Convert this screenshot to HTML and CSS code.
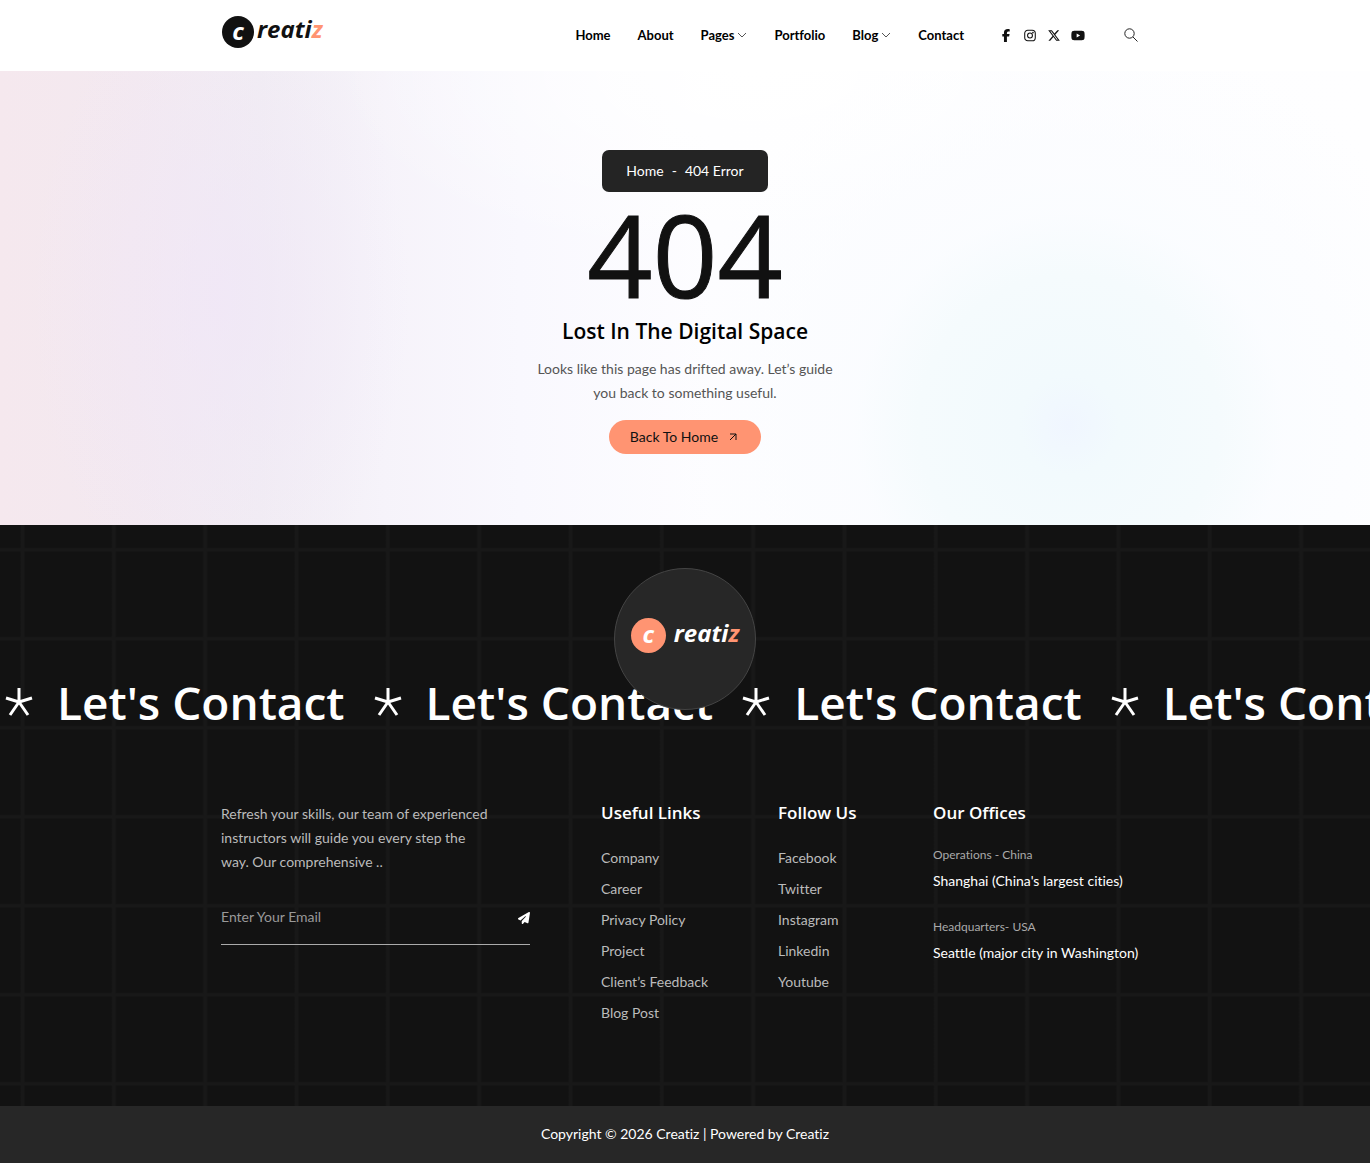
FILE: index.html
```html
<!DOCTYPE html>
<html lang="en">
<head>
    <meta charset="UTF-8">
    <meta name="viewport" content="width=device-width, initial-scale=1.0">
    <title>404 Error - Creatiz</title>
    <link rel="stylesheet" href="styles.css">
</head>
<body>
    <header class="header">
        <div class="container header-inner">
            <a class="logo" href="#"><span class="logo-mark">c</span><span class="logo-text">reati<span class="logo-z">z</span></span></a>

            <nav class="nav">
                <a href="#">Home</a>
                <a href="#">About</a>
                <a href="#">Pages
                    <svg class="caret" viewBox="0 0 10 6"><path d="M1 1l4 4 4-4"/></svg>
                </a>
                <a href="#">Portfolio</a>
                <a href="#">Blog
                    <svg class="caret" viewBox="0 0 10 6"><path d="M1 1l4 4 4-4"/></svg>
                </a>
                <a href="#">Contact</a>
            </nav>

            <div class="social">
                <a href="#" aria-label="Facebook">
                    <svg viewBox="0 0 320 512"><path d="M80 299.3V512H196V299.3h86.5l18-97.8H196V166.9c0-51.7 20.3-71.5 72.7-71.5c16.3 0 29.4 .4 37 1.2V7.9C291.4 4 256.4 0 236.2 0C129.3 0 80 50.5 80 141.4v60.1H14v97.8H80z"/></svg>
                </a>
                <a href="#" aria-label="Instagram">
                    <svg class="line" viewBox="0 0 16 16"><rect x="1.5" y="1.5" width="13" height="13" rx="3.8"/><circle cx="8" cy="8" r="3"/><circle class="dot" cx="11.6" cy="4.4" r="0.4"/></svg>
                </a>
                <a href="#" aria-label="X">
                    <svg viewBox="0 0 512 512"><path d="M389.2 48h70.6L305.6 224.2 487 464H345L233.7 318.6 106.5 464H35.8L200.7 275.5 26.8 48H172.4L272.9 180.9 389.2 48zM364.4 421.8h39.1L151.1 88h-42L364.4 421.8z"/></svg>
                </a>
                <a href="#" aria-label="Youtube">
                    <svg viewBox="0 0 576 512"><path d="M549.7 124.1c-6.3-23.7-24.8-42.3-48.3-48.6C458.8 64 288 64 288 64S117.2 64 74.6 75.5c-23.5 6.3-42 24.9-48.3 48.6-11.4 42.9-11.4 132.3-11.4 132.3s0 89.4 11.4 132.3c6.3 23.7 24.8 41.5 48.3 47.8C117.2 448 288 448 288 448s170.8 0 213.4-11.5c23.5-6.3 42-24.2 48.3-47.8 11.4-42.9 11.4-132.3 11.4-132.3s0-89.4-11.4-132.3zm-317.5 213.5V175.2l142.7 81.2-142.7 81.2z"/></svg>
                </a>
            </div>

            <button class="search-btn" type="button" aria-label="Search">
                <svg viewBox="0 0 14 14"><circle cx="5.5" cy="5.5" r="4.7"/><path d="M9 9l4.5 4.5"/></svg>
            </button>
        </div>
    </header>

    <main class="hero">
        <div class="breadcrumb"><a href="#">Home</a><span>-</span><span>404 Error</span></div>
        <h1>404</h1>
        <h2>Lost In The Digital Space</h2>
        <p>Looks like this page has drifted away. Let’s guide<br>you back to something useful.</p>
        <a class="home-btn" href="#">Back To Home
            <svg viewBox="0 0 8 8"><path d="M1 7l6-6M1 1h6v6"/></svg>
        </a>
    </main>

    <footer class="footer">
        <div class="footer-badge">
            <a class="logo logo-light" href="#"><span class="logo-mark">c</span><span class="logo-text">reati<span class="logo-z">z</span></span></a>
        </div>

        <div class="marquee">
            <div class="marquee-item"><svg viewBox="0 0 28 28"><path d="M14 14V0M14 14L1 10M14 14l13-4M14 14L5 27M14 14l9 13"/></svg><span>Let's Contact</span></div>
            <div class="marquee-item"><svg viewBox="0 0 28 28"><path d="M14 14V0M14 14L1 10M14 14l13-4M14 14L5 27M14 14l9 13"/></svg><span>Let's Contact</span></div>
            <div class="marquee-item"><svg viewBox="0 0 28 28"><path d="M14 14V0M14 14L1 10M14 14l13-4M14 14L5 27M14 14l9 13"/></svg><span>Let's Contact</span></div>
            <div class="marquee-item"><svg viewBox="0 0 28 28"><path d="M14 14V0M14 14L1 10M14 14l13-4M14 14L5 27M14 14l9 13"/></svg><span>Let's Contact</span></div>
        </div>

        <div class="container footer-cols">
            <div class="footer-about">
                <p>Refresh your skills, our team of experienced<br>instructors will guide you every step the<br>way. Our comprehensive ..</p>
                <form class="subscribe">
                    <input type="email" placeholder="Enter Your Email" aria-label="Enter Your Email">
                    <button type="button" aria-label="Subscribe">
                        <svg viewBox="0 0 512 512"><path d="M498.1 5.6c10.1 7 15.4 19.1 13.5 31.2l-64 416c-1.5 9.7-7.4 18.2-16 23s-18.9 5.4-28 1.6L284 427.7l-68.5 74.1c-8.9 9.7-22.9 12.9-35.2 8.1S160 493.2 160 480V396.4c0-4 1.5-7.8 4.2-10.7L331.8 202.8c5.8-6.3 5.6-16-.4-22s-15.7-6.4-22-.7L106 360.8 17.7 316.6C7.1 311.3 .3 300.7 0 288.9s5.9-22.8 16.1-28.7l448-256c10.7-6.1 23.9-5.5 34 1.4z"/></svg>
                    </button>
                </form>
            </div>

            <div>
                <h3>Useful Links</h3>
                <ul>
                    <li><a href="#">Company</a></li>
                    <li><a href="#">Career</a></li>
                    <li><a href="#">Privacy Policy</a></li>
                    <li><a href="#">Project</a></li>
                    <li><a href="#">Client’s Feedback</a></li>
                    <li><a href="#">Blog Post</a></li>
                </ul>
            </div>

            <div>
                <h3>Follow Us</h3>
                <ul>
                    <li><a href="#">Facebook</a></li>
                    <li><a href="#">Twitter</a></li>
                    <li><a href="#">Instagram</a></li>
                    <li><a href="#">Linkedin</a></li>
                    <li><a href="#">Youtube</a></li>
                </ul>
            </div>

            <div>
                <h3>Our Offices</h3>
                <div class="office">
                    <span class="office-label">Operations - China</span>
                    <span>Shanghai (China's largest cities)</span>
                </div>
                <div class="office">
                    <span class="office-label">Headquarters- USA</span>
                    <span>Seattle (major city in Washington)</span>
                </div>
            </div>
        </div>
    </footer>

    <div class="copyright">Copyright © 2026 Creatiz | Powered by Creatiz</div>
</body>
</html>
```
FILE: styles.css
```css
* {
    box-sizing: border-box;
}
body {
    margin: 0;
    font-family: Lato, "Liberation Sans", sans-serif;
    font-size: 14px;
    line-height: 24px;
    font-variant-ligatures: none;
    color: #111;
    background: #fff;
    overflow-x: hidden;
}
a {
    color: inherit;
    text-decoration: none;
}
h1, h2, h3, p, ul {
    margin: 0;
    padding: 0;
}
h1, h2, h3, .marquee {
    font-family: "Open Sans", "Noto Sans", sans-serif;
}
svg {
    display: block;
}
.container {
    max-width: 928px;
    margin: 0 auto;
}

/* Header */
.header-inner {
    display: flex;
    align-items: center;
    height: 71px;
    padding: 0 11px 0 1px;
}
.logo {
    display: flex;
    align-items: center;
    gap: 3px;
    padding-bottom: 8px;
    font-family: "Open Sans", sans-serif;
    font-style: italic;
    font-weight: 700;
    font-size: 24px;
}
.logo-mark {
    width: 32px;
    height: 32px;
    border-radius: 50%;
    background: #111;
    color: #fff;
    text-align: center;
    line-height: 29px;
}
.logo-text {
    padding-bottom: 5px;
    line-height: 28px;
}
.logo-z {
    color: #ff9472;
}
.nav {
    display: flex;
    gap: 27px;
    margin-left: auto;
    padding-bottom: 1px;
    font-size: 13px;
    font-weight: 700;
    color: #000;
}
.nav a {
    display: flex;
    align-items: center;
    gap: 3px;
}
.caret {
    width: 10px;
    height: 6px;
    fill: none;
    stroke: #555;
    stroke-width: 1;
}
.social {
    display: flex;
    gap: 10px;
    margin: 0 39px 0 35px;
}
.social svg {
    width: 14px;
    height: 13px;
    fill: #111;
}
.social .line {
    fill: none;
    stroke: #111;
    stroke-width: 1.3;
}
.social .dot {
    fill: #111;
}
.search-btn {
    padding: 0 0 2px;
    border: none;
    background: none;
    cursor: pointer;
}
.search-btn svg {
    width: 14px;
    height: 14px;
    fill: none;
    stroke: #222;
}

/* Hero */
.hero {
    display: flex;
    flex-direction: column;
    align-items: center;
    padding: 79px 20px 71px;
    text-align: center;
    background:
        radial-gradient(circle at 78% 78%, #f0f6ff 0, #f2fafd 50px, #f5fbfd 150px, rgba(250, 252, 255, 0.8) 215px, rgba(255, 255, 255, 0) 400px),
        radial-gradient(ellipse 420px 200px at 55% 0, #fff, rgba(255, 255, 255, 0)),
        radial-gradient(ellipse 190px 320px at 16% 50%, rgba(240, 230, 248, 0.7), rgba(240, 230, 248, 0)),
        linear-gradient(90deg, #f5e8ee 0%, #f3e9f0 10%, #f1edf3 19%, #f6f3fa 28%, #f9f8fe 38%, #fdfdff 52%, #fefeff 100%);
}
.breadcrumb {
    display: flex;
    gap: 8px;
    padding: 9px 24px;
    border-radius: 7px;
    background: #242424;
    color: #fff;
}
h1 {
    font-size: 114px;
    line-height: 124px;
    font-weight: 500;
    -webkit-text-stroke: 1px #111;
}
h2 {
    margin-bottom: 11px;
    font-size: 21px;
    line-height: 30px;
    font-weight: 600;
    color: #000;
}
.hero p {
    margin-bottom: 15px;
    color: #555;
}
.home-btn {
    display: flex;
    align-items: center;
    gap: 11px;
    padding: 5px 24px 5px 21px;
    border-radius: 17px;
    background: #ff9472;
}
.home-btn svg {
    width: 8px;
    height: 8px;
    fill: none;
    stroke: #111;
}

/* Footer */
.footer {
    padding: 43px 0 78px;
    background:
        linear-gradient(90deg, transparent 20px, #181818 21px, #181818 24px, transparent 25px) 0 0 / calc(100% / 15) 100%,
        linear-gradient(transparent 22px, #181818 24px, #181818 26px, transparent 27px) 0 0 / 100% 89px,
        #121212;
    color: #bbb;
}
.footer-badge {
    position: relative;
    z-index: 1;
    display: flex;
    align-items: center;
    justify-content: center;
    width: 142px;
    height: 142px;
    margin: 0 auto;
    border: 1px solid #444;
    border-radius: 50%;
    background: #272727;
}
.logo-light {
    gap: 8px;
    color: #fff;
}
.logo-light .logo-mark {
    width: 35px;
    height: 35px;
    background: #ff9472;
    line-height: 32px;
}
.marquee {
    display: flex;
    margin-top: -41px;
    margin-bottom: 66px;
    overflow: hidden;
    white-space: nowrap;
    font-size: 46px;
    line-height: 66px;
    font-weight: 600;
    color: #fff;
}
.marquee-item {
    display: flex;
    align-items: center;
    gap: 24px;
    padding: 0 24px 0 5px;
}
.marquee svg {
    flex: none;
    width: 28px;
    height: 28px;
    fill: none;
    stroke: #fff;
    stroke-width: 3;
}
.footer-cols {
    display: grid;
    grid-template-columns: 380fr 177fr 155fr 216fr;
}
.footer-about p {
    padding-top: 1px;
    margin-bottom: 28px;
}
.subscribe {
    display: flex;
    align-items: center;
    width: 309px;
    padding-bottom: 14px;
    border-bottom: 1px solid #aaa;
}
.subscribe input {
    flex: 1;
    height: 28px;
    padding: 0;
    border: none;
    outline: none;
    background: none;
    font: inherit;
    color: #fff;
}
.subscribe input::placeholder {
    color: #999;
}
.subscribe button {
    padding: 4px 0 0;
    border: none;
    background: none;
    cursor: pointer;
}
.subscribe button svg {
    width: 12px;
    height: 12px;
    fill: #fff;
}
h3 {
    margin-bottom: 17px;
    font-size: 17px;
    line-height: 24px;
    font-weight: 600;
    color: #fff;
}
.footer ul {
    list-style: none;
}
.footer li {
    padding: 4px 0 3px;
}
.office {
    display: flex;
    flex-direction: column;
    margin-bottom: 20px;
    line-height: 26px;
    color: #fff;
    white-space: nowrap;
}
.office-label {
    font-size: 12px;
    color: #aaa;
}
.copyright {
    padding: 16px 0 17px;
    text-align: center;
    color: #fff;
    background: #272727;
}
```
